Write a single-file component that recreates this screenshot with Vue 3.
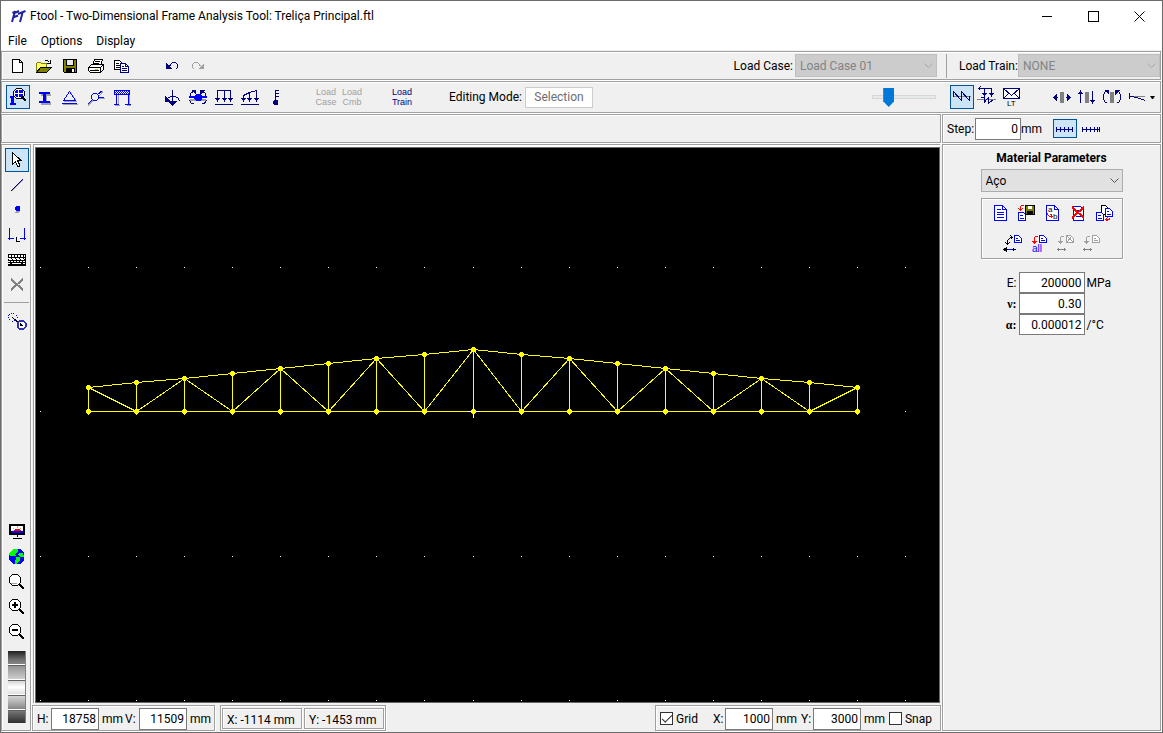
<script setup>
import { h, ref } from 'vue'

const N = '#000080'
const B = '#0000ff'
const K = '#000000'
const G = '#808080'
const L = '#a0a0a0'
const R = '#ff0000'
const W = '#ffffff'
const O = '#808000'

// Each shape: [path, stroke, fill, stroke width, dash]
const shapes = {
  new: [['M6.5 5.5H13.5L16.5 8.5V18.5H6.5Z', K, W], ['M13.5 5.5V8.5H16.5', K]],
  open: [
    ['M4.5 18.5V9.5L5.5 8.5H8.5L9.5 9.5H14.5V13.5H9Z', O, '#ffff60'],
    ['M4.5 18.5L8.5 13.5H19.5L14.5 18.5Z', K, O],
    ['M12.5 7.5L13.5 6.5H15.5L17.5 8.5M18.5 6V9.5H15', K],
  ],
  save: [
    ['M5.5 5.5H18.5V18.5H6.5L5.5 17.5Z', K, O],
    ['M8.5 5.5H15.5V11.5H8.5Z', K, '#e8e8e8'],
    ['M8 14H17V19H8Z', null, K], ['M14 15H16V18H14Z', null, W],
  ],
  print: [
    ['M8.5 11.5L10.5 5.5H18.5L16.5 11.5Z', K, W],
    ['M11 7.5H16M10 9.5H15', K],
    ['M4.5 13.5L7.5 10.5H19.5V15.5L16.5 18.5H6.5L4.5 16.5Z', K, W],
    ['M4.5 13.5H16.5V18.5M16.5 13.5L19.5 10.5M6 16.5H15', K],
    ['M11 15H14V16H11Z', null, '#d0d000'],
  ],
  copy: [
    ['M4.5 6.5H9.5L11.5 8.5V15.5H4.5Z', K, W], ['M6 9.5H9M6 11.5H10M6 13.5H10', K],
    ['M10.5 9.5H15.5L18.5 12.5V18.5H10.5Z', N, W], ['M15.5 9.5V12.5H18.5M12 12.5H14M12 14.5H17M12 16.5H17', N],
  ],
  undo: [['M6 9V15H12Z', null, N], ['M9.5 12L12.5 8.5H15.5L17.5 10.5V13.5L16.5 15', N]],
  redo: [['M18 9V15H12Z', null, L], ['M14.5 12L11.5 8.5H8.5L6.5 10.5V13.5L7.5 15', L]],
  inspect: [
    ['M4 11H8V18H10V20H4V18H5V13H4Z', null, B],
    ['M10.5 3.5H15.5L18.5 6.5V10.5L15.5 13.5H10.5L7.5 10.5V6.5Z', K, W],
    ['M10 5H12V8H9V6ZM13 5H16L17 6V8H13ZM9 9H12V12H10L9 11ZM13 9H17V11L16 12H13Z', null, B],
    ['M16 12L20 16', K, null, 2],
  ],
  section: [['M9 9H19V11H15V17H19V20H9V18H13V11H9Z', null, L], ['M7 7H18V9H14V16H18V18H7V16H11V9H7Z', null, B]],
  support: [['M12.5 7.5L18.5 16.5H6M5 19.5H20', L], ['M4 18.5H19', B], ['M11.5 6.5L17.5 15.5H5.5Z', B]],
  hinge: [
    ['M4 20.5L9 15.5M15 11L19 6.5M15 13.5H21', L],
    ['M3.5 19.5L8.5 14.5M13.5 9.5L18.5 5.5M14.5 12.5H20', B],
    ['M9.5 8.5H12.5L14.5 10.5V13.5L12.5 15.5H9.5L7.5 13.5V10.5Z', B],
  ],
  frame: [
    ['M4 5H20V10H4Z', null, B], ['M5 6.5H19M6 7.5H19M5 8.5H19', W, null, 1, '1 1'],
    ['M8.5 10V19M19.5 10V19M5 20.5H10M17 20.5H21', L],
    ['M6.500 10V19M18.500 10V19', B], ['M4 19.5H9M15 19.5H21', B],
  ],
  nodal: [
    ['M12.5 5V18', N], ['M8 16H17L12.5 21Z', null, N],
    ['M8.5 13L10.5 11.5H15.5L18.5 13.5L19.5 16', N], ['M5 11V17H11Z', null, N],
  ],
  moment: [
    ['M4 14H20V16H4Z', null, L], ['M3 11H21V13H3Z', null, B], ['M10 9H14L16 11V14L14 16H10L8 14V11Z', null, B],
    ['M5 5H10V10ZM14 10V5H19Z', null, N], ['M7 6.5L4.5 8.5V11M17 6.5L19.5 8.5V11M3.5 15L5.5 18.5H8M20.5 15L18.5 18.5H16', N],
  ],
  uniform: [
    ['M5 5.5H19M5.5 5V15M12.5 5V15M18.5 5V15M3 19.5H21', N],
    ['M3 13H8L5.5 17ZM10 13H15L12.5 17ZM16 13H21L18.5 17Z', null, N],
  ],
  linear: [
    ['M5.5 10.5L11.5 7.5L18.5 5.5M5.5 10V15M11.5 8V15M18.5 5V15M3 19.5H21', N],
    ['M3 13H8L5.5 17ZM9 13H14L11.5 17ZM16 13H21L18.5 17Z', null, N],
  ],
  thermal: [['M11.5 5V16M12 5.5H15M12 8.5H15M12 11.5H15', N], ['M10 15H13L14 16V19L13 20H10L9 19V16Z', null, N]],
  zigzag: [['M3 11.5H21', G], ['M3.5 11.5V6.5L11.5 15.5V6.5L19.5 15.5V11', N]],
  influence: [
    ['M2 14.5H21', G],
    ['M3 3.5H16.5V10M9.5 4V10M5.5 1.5L3.5 3.5L5.5 5.5', N], ['M7 8H12L9.5 12ZM14 8H19L16.5 12Z', null, N],
    ['M6 12.5H9.5V17L13.5 12.5V18.5L17.5 15', N],
  ],
  envelope: [['M3.5 3.5H19.5V13.5H3.5Z', N, W], ['M3.5 3.5L11.5 10.5L19.5 3.5M3.5 13.5L8.5 8.5M19.5 13.5L14.5 8.5', N]],
  fliph: [['M10 7H14V18H10Z', null, G], ['M6 12.5H8M16 12.5H18', N], ['M3 12.5L7 9V16ZM21 12.5L17 9V16Z', null, N]],
  flipv: [['M10 7H14V18H10Z', null, G], ['M5.5 6V18M17.5 6V18', N], ['M3 9L5.5 5L8 9ZM15 15H20L17.5 19Z', null, N]],
  turn: [
    ['M10 7H14V18H10Z', null, G],
    ['M7.5 6.5H5.5L3.5 9.5V14.5L5.5 17.5H7M16 6.5H18.5L20.5 9.5V14.5L18.5 17.5H16.5', N],
    ['M4 5H9V10ZM15 10V5H20Z', null, N],
  ],
  member: [['M5 11.5H20', G], ['M4.5 8V14M5 11.5L12 12.5L20 15.5', N]],
  stepa: [['M3 12.5H20M3.5 10V15M7.5 10V15M11.5 10V15M15.5 10V15M19.5 10V15', N]],
  stepb: [['M3 12.5H20M3.5 10V15M7.5 10V15M11.5 10V15M15.5 10V15M18.5 10V15M20.5 10V15', N]],
  arrow: [['M7.5 4.5V16.5L10.5 13.5L12.5 18.5H14.5V16.5L12.5 12.5H16Z', K, W]],
  line: [['M6.5 18.5L18 7', L], ['M6 18L17.5 6.5', N]],
  node: [['M12 10H15V13L13 15H10Z', null, L], ['M11 8H14L15 9V12L14 13H11L10 12V9Z', null, B]],
  dim: [['M4.5 5V17M19.5 5V17M3 15.5H9M15 15.5H21', B], ['M11.5 14V18.5H15', K]],
  keys: [
    ['M3 6H21V18H3Z', null, K],
    ['M4 7.5H20M3 13.5H20', W, null, 1, '2 1'], ['M3 10.5H20', W, null, 1, '3 1'],
    ['M4 8.5H20', W, null, 1, '2 1'], ['M4 11.5H20', W, null, 1, '3 1'], ['M3 15.5H5M7 15.5H16M18 15.5H20', W],
  ],
  del: [['M6 6L18 17M18 6L6 17', G, null, 2]],
  snapnode: [
    ['M6 4H9L12 7V9L9 12H6L3.5 9V7Z', B, null, 1, '1 1'], ['M7 8L15 15', K],
    ['M14.5 12H18.5L20.5 14V18L18.5 20H14.5L12.5 18V14Z', '#3030c0', W, 2], ['M15 13V17H18Z', null, K],
  ],
  fit: [
    ['M4 4H20V15H4Z', null, K], ['M6 6H18V13H6Z', null, W], ['M6 11H18V13H6Z', null, B],
    ['M8 11L10 9H14L16 11Z', null, R], ['M12 6V8M8 8H9M15 8H16', '#e0c000'], ['M12 15V17M8 18.5H17', K, null, 1],
  ],
  globe: [
    ['M9 4H15L19 8V15L15 19H9L4 15V8Z', null, B],
    ['M9 4H13V7L10 9L11 11H6L4 10V8ZM14 8H18L19 12L16 12L13 10ZM11 12H15V15L12 19H10Z', null, '#00ff00'],
  ],
  lens: [['M7.5 4.5H12.5L15.5 7.5V12.5L12.5 15.5H7.5L4.5 12.5V7.5Z', K, W], ['M6 13.5H12', L], ['M14 14L19 19', K, null, 2]],
  plus: [['M7.5 4.5H12.5L15.5 7.5V12.5L12.5 15.5H7.5L4.5 12.5V7.5Z', K, W], ['M7 10H13M10 7V13', K, null, 2], ['M14 14L19 19', K, null, 2]],
  minus: [['M7.5 4.5H12.5L15.5 7.5V12.5L12.5 15.5H7.5L4.5 12.5V7.5Z', K, W], ['M7 10H13', K, null, 2], ['M14 14L19 19', K, null, 2]],
  sheet: [['M6.5 4.5H14.5L18.5 8.5V19.5H6.5Z', B, W], ['M14.5 4.5V8.5H18.5M9 8.5H13M9 11.5H16M9 13.5H16M9 16.5H16', B]],
  load: [
    ['M4.5 11.5H9.5L11.5 13.5V19.5H4.5Z', B, W], ['M6 14.5H9M6 17.5H10', B],
    ['M11.5 4.5H20.5V13.5H11.5Z', K, O], ['M14 5H18V8H14Z', null, W], ['M13 10H19V14H13Z', null, K],
    ['M10 4.5H7.5L6.5 6V10M4.5 7.5L6.5 9.5L8.5 7.5', R],
  ],
  rename: [['M6.5 4.5H14.5L18.5 8.5V19.5H6.5Z', B, W], ['M14.5 4.5V8.5H18.5', B], ['M7.5 12V13.5L9.5 15.5H12M10.5 13L12.5 15.5L10.5 17.5', R]],
  remove: [['M7.5 5.5H14.5L17.5 8.5V19.5H7.5Z', B, W], ['M10 9.5H15M10 12.5H15M10 15.5H15', B], ['M6 6L18 17M18 6L6 17', R, null, 2]],
  duplicate: [
    ['M9.5 4.5H13.5L16.5 7.5V13.5H9.5Z', K, W], ['M4.5 11.5H9.5L11.5 13.5V19.5H4.5Z', B, W], ['M6 14.5H9M6 17.5H10', B],
    ['M13.5 7.5H17.5L20.5 10.5V15.5H13.5Z', B, W], ['M15 10.5H17M15 13.5H19', B], ['M14 18.5H17.5V16.5M15.5 16.5L13.5 18.5L15.5 20', R],
  ],
  applysel: [
    ['M13.5 4.5H17.5L20.5 7.5V11.5H13.5Z', B, W], ['M15 7.5H17M15 9.5H19', B],
    ['M6.5 13V9.5L9.5 6.5H11M4.500 11.5L6.5 13.5L8.5 11.5M9.5 4.5L11.5 6.5L9.5 8.5', K],
    ['M4 18.5H13', B], ['M3 18.5L5 17V20ZM14 18.5L12 17V20Z', K, K],
  ],
  applyall: [['M12.5 4.5H16.5L19.5 7.5V11.5H12.5Z', B, W], ['M14 7.5H16M14 9.5H18', B], ['M11 5.5H8.5L7.5 7V12M5.5 10L7.5 12.5L9.5 10', R]],
  goneA: [
    ['M13.5 4.5H17.5L20.5 7.5V11.5H13.5Z', L, W], ['M14 5L20 11M19 5L14 11', L],
    ['M11 5.5H8.5L7.5 7V12M5.5 10L7.5 12.5L9.5 10', L], ['M4 18.5H13M5.5 17V20M11.5 17V20', G],
  ],
  goneB: [
    ['M13.5 4.5H17.5L20.5 7.5V11.5H13.5Z', L, W], ['M15 7.5H17M15 9.5H19', L],
    ['M11 5.5H8.5L7.5 7V12M5.5 10L7.5 12.5L9.5 10', L], ['M4 18.5H13M5.5 17V20M11.5 17V20', G],
  ],
}

const labels = {
  envelope: [['LT', 7, 21, 8, K]],
  rename: [['a', 8, 11, 8, K], ['b', 13, 18, 8, K]],
  applyall: [['all', 5, 21, 10, B]],
}

const Icon = (props) =>
  h('svg', { viewBox: '0 0 24 24', width: 24, height: 24, 'shape-rendering': 'crispEdges', 'aria-hidden': 'true' }, [
    ...shapes[props.name].map(([d, stroke, fill, width, dash]) =>
      h('path', { d, stroke: stroke || 'none', fill: fill || 'none', 'stroke-width': width || 1, 'stroke-dasharray': dash }),
    ),
    ...(labels[props.name] || []).map(([t, x, y, size, fill]) =>
      h('text', { x, y, fill, 'font-size': size, 'font-family': '"Liberation Sans", Arial, sans-serif' }, t),
    ),
  ])
Icon.props = ['name']

const menus = ['File', 'Options', 'Display']
const fileTools = [['new', 'open', 'save', 'print', 'copy'], ['undo', 'redo']]
const attributeTools = ['inspect', 'section', 'support', 'hinge', 'frame']
const loadTools = ['nodal', 'moment', 'uniform', 'linear', 'thermal']
const resultTools = ['zigzag', 'influence', 'envelope']
const viewTools = ['fliph', 'flipv', 'turn', 'member']
const drawTools = ['arrow', 'line', 'node', 'dim', 'keys', 'del']
const zoomTools = ['fit', 'globe', 'lens', 'plus', 'minus']
const materialRows = [
  ['sheet', 'load', 'rename', 'remove', 'duplicate'],
  ['applysel', 'applyall', 'goneA', 'goneB'],
]
const properties = ref([
  { id: 'young', label: 'E:', value: '200000', unit: 'MPa' },
  { id: 'poisson', label: 'ν:', value: '0.30', unit: '' },
  { id: 'thermal', label: 'α:', value: '0.000012', unit: '/°C' },
])
const extents = ref([{ id: 'H', value: '18758' }, { id: 'V', value: '11509' }])
const grid = ref([{ id: 'X', value: '1000' }, { id: 'Y', value: '3000' }])
const step = ref('0')
const gridOn = ref(true)
const snapOn = ref(false)
const scale = ref(20)

// Truss: 16 bays, apex over the middle node
const bays = 16
const px = (i) => Math.round(52 + i * 48.07)
const baseY = 263
const topY = (i) => Math.round(239.2 - (8 - Math.abs(8 - i)) * 4.8)
const nodes = Array.from({ length: bays + 1 }, (_, i) => i)
const topChord = nodes.map((i) => `${px(i) + 0.5},${topY(i) + 0.5}`).join(' ')
const web = nodes.map((i) => `${px(i) + 0.5},${(i % 2 ? baseY : topY(i)) + 0.5}`).join(' ')
const dots = [119, 263, 408, 552].flatMap((y) => Array.from({ length: 19 }, (_, i) => ({ x: px(i - 1), y })))
const joints = nodes.flatMap((i) => [{ x: px(i), y: baseY }, { x: px(i), y: topY(i) }])
const jointPath = joints
  .map(({ x, y }) => `M${x - 1} ${y - 2}h3v1h1v3h-1v1h-3v-1h-1v-3h1z M${x} ${y + 3}h1v1h-1z`)
  .join('')
</script>

<template>
  <div class="window">
    <header class="title">
      <svg class="logo" viewBox="0 0 16 16" width="16" height="16" aria-hidden="true">
        <path d="M2 14L4.5 5L9 3M3 9.5L8 7.5M8 6L15.5 3M12.5 5L10 14M5.5 3.5L2.5 5" fill="none" stroke="#23239a" stroke-width="2" />
      </svg>
      <h1>Ftool - Two-Dimensional Frame Analysis Tool: Treliça Principal.ftl</h1>
      <div class="controls">
        <button aria-label="Minimize"><svg width="11" height="11"><path d="M0 5.5H10" /></svg></button>
        <button aria-label="Maximize"><svg width="11" height="11"><path d="M0.5 0.5H10.5V10.5H0.5Z" /></svg></button>
        <button aria-label="Close"><svg class="smooth" width="11" height="11"><path d="M0.5 0.5L10.5 10.5M10.5 0.5L0.5 10.5" /></svg></button>
      </div>
    </header>
    <nav class="menu">
      <button v-for="m in menus" :key="m">{{ m }}</button>
    </nav>

    <div class="panel bar filebar">
      <div v-for="(group, i) in fileTools" :key="i" class="group">
        <button v-for="t in group" :key="t" class="tool" :aria-label="t"><Icon :name="t" /></button>
      </div>
      <div class="push combos">
        <label for="case">Load Case:</label>
        <span class="combo disabled">
          <select id="case" disabled><option>Load Case 01</option></select>
          <svg width="9" height="6"><path d="M0.5 0.5L4.5 4.5L8.5 0.5" /></svg>
        </span>
        <span class="divider"></span>
        <label class="train" for="train">Load Train:</label>
        <span class="combo disabled">
          <select id="train" disabled><option>NONE</option></select>
          <svg width="9" height="6"><path d="M0.5 0.5L4.5 4.5L8.5 0.5" /></svg>
        </span>
      </div>
    </div>

    <div class="panel bar">
      <div class="group">
        <button v-for="t in attributeTools" :key="t" class="tool" :class="{ on: t === 'inspect' }" :aria-label="t"><Icon :name="t" /></button>
      </div>
      <div class="group">
        <button v-for="t in loadTools" :key="t" class="tool" :aria-label="t"><Icon :name="t" /></button>
      </div>
      <div class="group">
        <button class="tool words" disabled>Load<br />Case</button>
        <button class="tool words" disabled>Load<br />Cmb</button>
      </div>
      <div class="group">
        <button class="tool words">Load<br />Train</button>
      </div>
      <label class="mode" for="mode">Editing Mode:</label>
      <input id="mode" class="modebox" value="Selection" disabled />
      <input v-model="scale" class="push slider" type="range" min="0" max="100" aria-label="Scale" />
      <div class="results">
        <button v-for="t in resultTools" :key="t" class="tool" :class="{ on: t === 'zigzag' }" :aria-label="t"><Icon :name="t" /></button>
        <span class="spring"></span>
        <button v-for="t in viewTools" :key="t" class="tool" :aria-label="t"><Icon :name="t" /></button>
        <button class="caret" aria-label="More"><svg width="5" height="3"><path d="M0 0H5L3 3H2Z" /></svg></button>
      </div>
    </div>

    <div class="split">
      <div class="panel blank"></div>
      <div class="panel side steps">
        <label for="step">Step:</label>
        <input id="step" v-model="step" class="field" />
        <span>mm</span>
        <button class="tool short on" aria-label="Even steps"><Icon name="stepa" /></button>
        <button class="tool short" aria-label="Uneven steps"><Icon name="stepb" /></button>
      </div>
    </div>

    <main class="work">
      <div class="panel toolbox">
        <button v-for="t in drawTools" :key="t" class="tool" :class="{ on: t === 'arrow' }" :aria-label="t"><Icon :name="t" /></button>
        <hr />
        <button class="tool" aria-label="Attract"><Icon name="snapnode" /></button>
        <span class="spring"></span>
        <button v-for="t in zoomTools" :key="t" class="tool" :aria-label="t"><Icon :name="t" /></button>
        <div class="wheel"></div>
      </div>

      <section class="center">
        <div class="canvas">
          <svg class="model" shape-rendering="crispEdges" role="img" aria-label="Truss model">
            <rect v-for="(d, i) in dots" :key="i" :x="d.x" :y="d.y" width="1" height="1" fill="#fff" />
            <g fill="none" stroke="#ffff00">
              <path :d="`M${px(0)} ${baseY + 0.5}H${px(bays)}`" />
              <polyline :points="topChord" />
              <polyline :points="web" />
              <path v-for="i in nodes" :key="i" :d="`M${px(i) + 0.5} ${topY(i)}V${baseY}`" />
            </g>
            <path :d="jointPath" fill="#ffff00" />
            <path :d="`M${px(8) - 6} ${baseY + 0.5}h4m5 0h4M${px(8) + 0.5} ${baseY - 5}v3m0 5v4`" stroke="#fff" />
          </svg>
        </div>
        <footer class="status">
          <div class="panel fields extents">
            <template v-for="e in extents" :key="e.id">
              <label :for="e.id">{{ e.id }}:</label>
              <input :id="e.id" v-model="e.value" class="field" />
              <span>mm</span>
            </template>
          </div>
          <div class="panel coords">
            <output class="panel">X: -1114 mm</output>
            <output class="panel">Y: -1453 mm</output>
          </div>
          <div class="panel fields gridding push">
            <label class="check gridcheck"><input v-model="gridOn" type="checkbox" />Grid</label>
            <template v-for="g in grid" :key="g.id">
              <label class="axis" :for="g.id">{{ g.id }}:</label>
              <input :id="g.id" v-model="g.value" class="field" />
              <span>mm</span>
            </template>
            <label class="check"><input v-model="snapOn" type="checkbox" />Snap</label>
          </div>
        </footer>
      </section>

      <aside class="panel side material">
        <h2>Material Parameters</h2>
        <span class="combo">
          <select aria-label="Material"><option>Aço</option></select>
          <svg width="9" height="6"><path d="M0.5 0.5L4.5 4.5L8.5 0.5" /></svg>
        </span>
        <div class="panel actions">
          <div v-for="(row, i) in materialRows" :key="i">
            <button v-for="t in row" :key="t" class="tool" :aria-label="t"><Icon :name="t" /></button>
          </div>
        </div>
        <div class="props">
          <template v-for="p in properties" :key="p.id">
            <label :for="p.id" :class="{ greek: p.id !== 'young' }">{{ p.label }}</label>
            <input :id="p.id" v-model="p.value" class="field" />
            <span>{{ p.unit }}</span>
          </template>
        </div>
      </aside>
    </main>
  </div>
</template>

<style>
body {
  background: #f0f0f0;
}
</style>

<style scoped>
* {
  box-sizing: border-box;
}
.window {
  display: flex;
  flex-direction: column;
  height: 100vh;
  overflow: hidden;
  border: 1px solid #6b6b6b;
  padding-bottom: 1px;
  background: #f0f0f0;
  color: #000;
  font: 12px/16px Roboto, "Noto Sans", sans-serif;
}
button,
input,
select {
  margin: 0;
  font: inherit;
  color: inherit;
}
button {
  border: 0;
  padding: 0;
  background: none;
}
label,
span,
output {
  white-space: nowrap;
}
svg {
  display: block;
}
.push {
  margin-left: auto;
}
.spring {
  flex: 1;
}
.title {
  display: flex;
  align-items: center;
  flex: none;
  height: 30px;
  padding-left: 9px;
  background: #fff;
}
.title h1 {
  margin: 0 0 0 4px;
  font-size: 12px;
  font-weight: 400;
  white-space: nowrap;
}
.controls {
  display: flex;
  height: 100%;
  margin-left: auto;
}
.controls button {
  display: grid;
  place-items: center;
  width: 46px;
}
.controls svg {
  fill: none;
  stroke: #000;
  shape-rendering: crispEdges;
}
.controls .smooth {
  shape-rendering: auto;
}
.menu {
  display: flex;
  flex: none;
  gap: 14px;
  height: 19px;
  margin-bottom: 1px;
  padding: 0 7px;
  background: #fff;
}
.panel {
  border: 1px solid #a0a0a0;
  box-shadow: inset 1px 1px #fff, 1px 1px #fff;
}
.bar {
  display: flex;
  align-items: center;
  flex: none;
  height: 32px;
  margin: 0 1px 1px 0;
  padding-left: 4px;
}
.filebar {
  height: 29px;
}
.group {
  display: flex;
  gap: 2px;
  margin-right: 26px;
}
.tool {
  flex: none;
  width: 24px;
  height: 24px;
}
.tool svg {
  overflow: visible;
}
.tool.on {
  background: #cce4f7;
  outline: 1px solid #005499;
  outline-offset: -1px;
}
.words {
  color: #000080;
  font: 9px/10px "Liberation Sans", Arial, sans-serif;
}
.words:disabled {
  color: #a0a0a0;
}
.combos {
  display: flex;
  align-items: center;
  gap: 2px;
}
.combo {
  position: relative;
  width: 142px;
}
.combo select {
  display: block;
  width: 100%;
  height: 23px;
  padding: 0 4px;
  border: 1px solid #adadad;
  border-radius: 0;
  background: #e1e1e1;
  appearance: none;
}
.combo svg {
  position: absolute;
  top: 9px;
  right: 4px;
  fill: none;
  stroke: #555;
}
.disabled select {
  border-color: #bfbfbf;
  background: #ccc;
  color: #838383;
  opacity: 1;
}
.disabled svg {
  stroke: #a8a8a8;
}
.divider {
  width: 1px;
  height: 24px;
  margin: 0 10px 0 7px;
  background: #a0a0a0;
}
.train {
  width: 57px;
}
.mode {
  width: 74px;
  margin-left: 9px;
}
.modebox {
  width: 68px;
  height: 21px;
  margin-left: 2px;
  border: 1px solid #ccc;
  padding: 0;
  background: #fff;
  color: #6d6d6d;
  text-align: center;
}
.slider {
  width: 64px;
  height: 20px;
  margin-right: 14px;
  background: none;
  appearance: none;
}
.slider::-webkit-slider-runnable-track {
  height: 4px;
  border: 1px solid #d6d6d6;
  background: #e7eaea;
}
.slider::-webkit-slider-thumb {
  width: 11px;
  height: 19px;
  margin-top: -8px;
  background: #0078d7;
  clip-path: polygon(0 0, 100% 0, 100% 70%, 50% 100%, 0 70%);
  appearance: none;
}
.results {
  display: flex;
  align-items: center;
  gap: 1px;
  width: 210px;
}
.caret {
  width: 10px;
  height: 24px;
}
.split {
  display: flex;
  flex: none;
  gap: 1px;
  height: 29px;
  margin: 0 1px 1px 0;
}
.blank {
  flex: 1;
}
.side {
  flex: none;
  width: 219px;
}
.steps {
  display: flex;
  align-items: center;
  padding-left: 4px;
}
.steps label {
  width: 28px;
}
.steps .field {
  width: 46px;
}
.steps span {
  width: 32px;
}
.short {
  display: grid;
  place-content: center;
  height: 19px;
  margin-right: 2px;
}
.field {
  width: 48px;
  height: 22px;
  border: 1px solid #7a7a7a;
  padding: 0 2px;
  background: #fff;
  text-align: right;
}
.work {
  display: flex;
  flex: 1;
  min-height: 0;
  margin-right: 1px;
}
.toolbox {
  display: flex;
  flex: none;
  flex-direction: column;
  align-items: flex-end;
  gap: 1px;
  width: 30px;
  padding: 3px 1px 7px 0;
}
.toolbox hr {
  width: 25px;
  height: 1px;
  margin: 4px 0 5px;
  border: 0;
  background: #a0a0a0;
}
.wheel {
  flex: none;
  width: 18px;
  height: 72px;
  margin: 6px 3px 0 0;
  border-right: 1px solid #808080;
  background:
    repeating-linear-gradient(#fff0 0 13px, #fff 13px 14px, #606060 14px 15px),
    linear-gradient(#202020, #707070 12%, #a0a0a0 25%, #d8d8d8 42%, #fff 50%, #d8d8d8 62%, #a0a0a0 75%, #606060 88%, #303030);
}
.center {
  display: flex;
  flex: 1;
  flex-direction: column;
  min-width: 0;
  margin: 0 1px;
}
.canvas {
  flex: 1;
  min-height: 0;
  margin: 0 1px 1px;
  border: 1px solid #a0a0a0;
  border-width: 1px 0 0 1px;
  padding: 2px 0 0 1px;
  background: #fff;
}
.model {
  width: 100%;
  height: 100%;
  border: 1px solid #696969;
  background: #000;
}
.status {
  display: flex;
  flex: none;
  gap: 5px;
  height: 27px;
  padding-top: 1px;
}
.fields {
  display: flex;
  align-items: center;
  gap: 3px;
  padding: 1px 4px 0;
}
.extents label {
  width: 11px;
}
.extents span {
  width: 20px;
}
.gridding {
  padding-right: 8px;
}
.gridding .axis {
  width: 9px;
}
.gridding span {
  width: 22px;
}
.coords {
  display: flex;
  gap: 2px;
  padding: 2px 1px 1px;
}
.coords output {
  width: 80px;
  padding: 3px 4px 0;
}
.check {
  display: flex;
  align-items: center;
  gap: 3px;
}
.gridcheck {
  margin-right: 12px;
}
.check input {
  display: grid;
  place-items: center;
  width: 13px;
  height: 13px;
  border: 1px solid #333;
  background: #fff;
  appearance: none;
}
.check input:checked::before {
  content: "";
  width: 9px;
  height: 4px;
  margin-bottom: 3px;
  border: solid #333;
  border-width: 0 0 1px 1px;
  transform: rotate(-45deg);
}
.material {
  display: flex;
  flex-direction: column;
  align-items: center;
  padding-top: 5px;
}
.material h2 {
  margin: 0 0 3px;
  font-size: 12px;
  font-weight: 700;
}
.actions {
  width: 142px;
  height: 61px;
  margin-top: 6px;
  padding-top: 2px;
}
.actions div {
  display: flex;
  justify-content: center;
  gap: 2px;
  height: 30px;
}
.props {
  display: grid;
  grid-template-columns: 34px 66px 34px;
  align-items: center;
  row-gap: 0;
  column-gap: 2px;
  margin-top: 13px;
}
.props label {
  text-align: right;
}
.props .greek {
  font-family: "Liberation Serif", "Times New Roman", serif;
  font-weight: 700;
}
.props .field {
  width: 66px;
  height: 21px;
}
</style>
